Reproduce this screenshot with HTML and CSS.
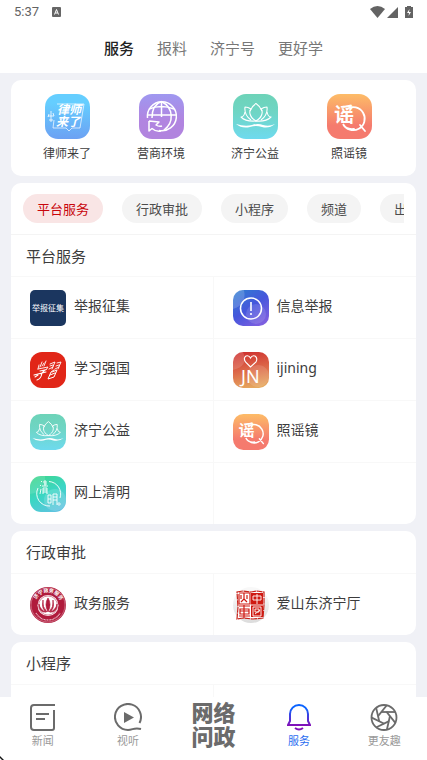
FILE: index.html
```
<!DOCTYPE html>
<html lang="zh-CN">

<head>
    <meta charset="UTF-8">
    <meta name="viewport" content="width=device-width, initial-scale=1.0">
    <title>服务</title>
    <link rel="stylesheet" href="styles.css">
</head>

<body>
    <!-- shared gradients and symbols -->
    <svg class="sprite" width="0" height="0" aria-hidden="true">
        <defs>
            <linearGradient id="sky" x1="0" y1="0" x2="0" y2="1">
                <stop offset="0.2" stop-color="#65ceff" />
                <stop offset="1" stop-color="#6ca1f3" />
            </linearGradient>
            <linearGradient id="violet" x1="0" y1="0" x2="0" y2="1">
                <stop offset="0" stop-color="#9f98f0" />
                <stop offset="0.6" stop-color="#b184e0" />
                <stop offset="1" stop-color="#b184de" />
            </linearGradient>
            <linearGradient id="mint" x1="0" y1="0" x2="0" y2="1">
                <stop offset="0" stop-color="#6dd3b8" />
                <stop offset="0.4" stop-color="#6fd5c4" />
                <stop offset="1" stop-color="#6edaee" />
            </linearGradient>
            <linearGradient id="peach" x1="0" y1="0" x2="0" y2="1">
                <stop offset="0" stop-color="#fdbc67" />
                <stop offset="0.7" stop-color="#f57b6e" />
                <stop offset="1" stop-color="#f57a6e" />
            </linearGradient>
            <linearGradient id="indigo" x1="0" y1="0" x2="0.7" y2="1">
                <stop offset="0" stop-color="#2c80d0" />
                <stop offset="0.55" stop-color="#4656dc" />
                <stop offset="1" stop-color="#7c5fe0" />
            </linearGradient>
            <linearGradient id="sunset" x1="0.4" y1="0" x2="0.6" y2="1">
                <stop offset="0" stop-color="#cf3330" />
                <stop offset="0.5" stop-color="#dd6a4a" />
                <stop offset="1" stop-color="#e6a95f" />
            </linearGradient>
            <linearGradient id="spring" x1="0.2" y1="0" x2="0.7" y2="1">
                <stop offset="0" stop-color="#3fd68f" />
                <stop offset="0.5" stop-color="#3bd6c4" />
                <stop offset="1" stop-color="#5fc3e0" />
            </linearGradient>
            <linearGradient id="silver" x1="0" y1="0" x2="0" y2="1">
                <stop offset="0.2" stop-color="#f8f8f8" />
                <stop offset="1" stop-color="#dcdcdc" />
            </linearGradient>
            <linearGradient id="bell" x1="0" y1="0" x2="0" y2="28" gradientUnits="userSpaceOnUse">
                <stop offset="0.2" stop-color="#0a63ff" />
                <stop offset="0.8" stop-color="#8210b8" />
            </linearGradient>
            <path id="seal-arc" d="M5.400 21.500A13 13 0 1 1 30.600 21.500" />
        </defs>
        <symbol id="lotus" viewBox="0 0 45 45">
            <rect width="45" height="45" rx="13" fill="url(#mint)" />
            <g fill="none" stroke="#fff" stroke-width="1.100" stroke-linejoin="round">
                <path d="M17 17Q19 12 23 9.500Q27 12 29 17" />
                <path d="M23 27C16 23 16 17 18 15M23 27C30 23 30 17 28 15" />
                <path d="M18 15Q15 13 12 13Q11 21 18 26M28 15Q31 13 34 13Q35 21 28 26" />
                <path d="M12 18Q11 23 8 23Q13 28 23 27Q33 28 38 23Q35 23 34 18" />
            </g>
            <path d="M3 30Q12 33 19 31Q25 29 30 31Q36 33 42 30Q36 35 29 33Q23 31 17 33Q9 35 3 30Z" fill="#fff" />
        </symbol>
        <symbol id="rumor" viewBox="0 0 45 45">
            <rect width="45" height="45" rx="13" fill="url(#peach)" />
            <text x="7" y="28" font-size="20" font-weight="700" fill="#fff">谣</text>
            <path d="M20 15A11.500 11.500 0 1 1 16 30Q19 36 27 35M33 31L38 37" fill="none" stroke="#fff" stroke-width="1.800" stroke-linecap="round" />
        </symbol>
    </svg>

    <header>
        <div class="status">
            <span class="clock">5:37</span>
            <svg width="10" height="10" viewBox="0 0 10 10">
                <rect width="9" height="10" rx="1" fill="#666" />
                <path d="M2.500 7.500L4.500 2.500L6.500 7.500M3.300 6H5.700" fill="none" stroke="#fff" />
            </svg>
            <svg class="wifi" width="15" height="12" viewBox="0 0 15 12">
                <path d="M0 3Q7.500-3 15 3L7.500 12Z" fill="#636363" />
            </svg>
            <svg width="11" height="11" viewBox="0 0 11 11">
                <path d="M11 0V11H0Z" fill="#636363" />
            </svg>
            <svg class="battery" width="8" height="12" viewBox="0 0 8 12">
                <path d="M0 1H2V0H6V1H8V12H0Z" fill="#636363" />
                <path d="M4.500 3L2 7H4L3.500 10L6 6H4Z" fill="#fff" />
            </svg>
        </div>
        <nav class="top-nav">
            <a href="#" class="active">服务</a>
            <a href="#">报料</a>
            <a href="#">济宁号</a>
            <a href="#">更好学</a>
        </nav>
    </header>

    <main>
        <section class="card quick">
            <a href="#">
                <svg class="quick-icon" viewBox="0 0 45 45">
                    <rect width="45" height="45" rx="13" fill="url(#sky)" />
                    <g fill="none" stroke="#fff">
                        <path d="M12 10H39L35 34H27L24 37L21 34H8L9 26" stroke-width="0.700" />
                        <path d="M3 22H9M6 17V28M4 20L3 23M8 19L9 22M4 26H8" stroke-width="0.800" />
                    </g>
                    <g fill="#fff" font-size="12" font-weight="700" font-style="italic">
                        <text x="12" y="20">律师</text>
                        <text x="11" y="32">来了</text>
                    </g>
                </svg>
                <span>律师来了</span>
            </a>
            <a href="#">
                <svg class="quick-icon" viewBox="0 0 45 45">
                    <rect width="45" height="45" rx="13" fill="url(#violet)" />
                    <g fill="none" stroke="#fff" stroke-width="1.500">
                        <path d="M8.500 24A14.500 14.500 0 1 1 20 36.500" />
                        <path d="M22.500 7.500V23M10 15Q22.500 10 35 15M8 21H37" />
                        <path d="M22.500 7.500C15 10 13 17 13 24M22.500 7.500C35 14 35 29 25 36" />
                        <path d="M10 27V37L13 34.500Q17 38 22 37M10 27L20 28L17 31Q20 33 23 32" stroke-linejoin="round" />
                    </g>
                </svg>
                <span>营商环境</span>
            </a>
            <a href="#">
                <svg class="quick-icon"><use href="#lotus" /></svg>
                <span>济宁公益</span>
            </a>
            <a href="#">
                <svg class="quick-icon"><use href="#rumor" /></svg>
                <span>照谣镜</span>
            </a>
        </section>

        <section class="card">
            <div class="chips">
                <button class="chip selected">平台服务</button>
                <button class="chip">行政审批</button>
                <button class="chip">小程序</button>
                <button class="chip">频道</button>
                <button class="chip">出行</button>
            </div>
            <h2>平台服务</h2>
            <div class="grid">
                <a href="#">
                    <svg class="icon" viewBox="0 0 36 36">
                        <rect width="36" height="36" rx="5" fill="#1b365f" />
                        <text x="2" y="21" font-size="8" fill="#fff">举报征集</text>
                    </svg>
                    <span>举报征集</span>
                </a>
                <a href="#">
                    <svg class="icon" viewBox="0 0 36 36">
                        <rect width="36" height="36" rx="10" fill="url(#indigo)" />
                        <path d="M0 19V10Q0 0 10 0H11Q14 15 0 19Z" fill="#fff" opacity="0.180" />
                        <circle cx="23" cy="24" r="10" fill="#fff" opacity="0.120" />
                        <circle cx="18" cy="18.500" r="10.500" fill="none" stroke="#fff" stroke-width="1.500" />
                        <path d="M18 12V21" stroke="#fff" stroke-width="1.600" />
                        <circle cx="18" cy="24" r="1.100" fill="#fff" />
                    </svg>
                    <span>信息举报</span>
                </a>
                <a href="#">
                    <svg class="icon" viewBox="0 0 36 36">
                        <rect width="36" height="36" rx="12" fill="#e12618" />
                        <!-- brush-written name -->
                        <g fill="none" stroke="#fff" stroke-linecap="round">
                            <path d="M9 13L8 17M12 10L10 15M14 11L12 14M16 9L14 14M8 17L18 15L16 18" stroke-width="0.900" />
                            <path d="M10 19L15 18L11 22M4 23L16 20M12 21Q11 27 7 28M5 25L8 23" stroke-width="1.100" />
                            <path d="M20 12L25 10L22 17M20 14L23 13M19 17L23 15M27 11L31 10L28 17M26 14L29 13M25 17L29 15" stroke-width="0.900" />
                            <path d="M24 18L21 20L18 27L24 25L27 18L22 20M20 23L25 21" stroke-width="1" />
                        </g>
                    </svg>
                    <span>学习强国</span>
                </a>
                <a href="#">
                    <svg class="icon" viewBox="0 0 36 36">
                        <rect width="36" height="36" rx="10" fill="url(#sunset)" />
                        <path d="M0 18V10Q0 0 10 0Q16 14 0 18Z" fill="#fff" opacity="0.150" />
                        <circle cx="25" cy="24" r="11" fill="#fff" opacity="0.120" />
                        <path d="M17.500 15L12.500 10Q10 6 13 4Q16 3 17.500 6Q19 3 22 4Q25 6 23 10Z" fill="none" stroke="#fff" stroke-width="1.100" />
                        <text class="latin" x="8" y="31" font-size="18" fill="#fff">JN</text>
                    </svg>
                    <span class="latin">ijining</span>
                </a>
                <a href="#">
                    <svg class="icon"><use href="#lotus" /></svg>
                    <span>济宁公益</span>
                </a>
                <a href="#">
                    <svg class="icon"><use href="#rumor" /></svg>
                    <span>照谣镜</span>
                </a>
                <a href="#">
                    <svg class="icon" viewBox="0 0 36 36">
                        <rect width="36" height="36" rx="11" fill="url(#spring)" />
                        <path d="M0 18V11Q0 0 11 0H15Q16 16 0 18Z" fill="#fff" opacity="0.120" />
                        <circle cx="25" cy="24" r="11" fill="#fff" opacity="0.150" />
                        <path d="M8 12A12.500 12.500 0 0 0 20 30M19 5.500A12.500 12.500 0 0 1 30 22" fill="none" stroke="#fff" stroke-width="0.900" />
                        <circle cx="29" cy="28" r="1.200" fill="none" stroke="#fff" stroke-width="0.800" />
                        <g fill="none" stroke="#fff" stroke-width="0.900">
                            <path d="M11 5L12 6M10 9L11 10M10 18L11 13M13 6H17M14 8H17M15 4V10M12 10H18M13 18V12H17V18M13 14H17M13 16H17" />
                            <path d="M18 19V27M18 19H21V27H18M18 23H21M23 29V18H27V29M23 21H27M23 24H27" />
                        </g>
                    </svg>
                    <span>网上清明</span>
                </a>
                <div class="blank"></div>
            </div>
        </section>

        <section class="card">
            <h2>行政审批</h2>
            <div class="grid">
                <a href="#">
                    <svg class="icon" viewBox="0 0 36 36">
                        <circle cx="18" cy="18" r="18" fill="#b01b3c" />
                        <circle cx="18" cy="18" r="17" fill="none" stroke="#e5b4c0" stroke-width="0.500" />
                        <circle cx="18" cy="18.500" r="10.500" fill="#fff" />
                        <circle cx="18" cy="18.500" r="9.500" fill="none" stroke="#b01b3c" stroke-width="0.500" />
                        <text font-size="5" font-weight="700" fill="#fff"><textPath href="#seal-arc" startOffset="9">济宁政务服务</textPath></text>
                        <path d="M6 26Q10 33 18 33Q26 33 30 26" fill="none" stroke="#eec5cf" stroke-width="1.200" stroke-dasharray="1 0.500" />
                        <path d="M18 11Q22 17 18 25Q14 17 18 11ZM13 13Q12 20 17 25Q11 23 13 13ZM23 13Q24 20 19 25Q25 23 23 13ZM9 17Q10 23 16 25Q9 26 9 17ZM27 17Q26 23 20 25Q27 26 27 17Z" fill="#b01b3c" stroke="#b01b3c" stroke-width="0.700" />
                    </svg>
                    <span>政务服务</span>
                </a>
                <a href="#">
                    <svg class="icon" viewBox="0 0 36 36">
                        <circle cx="18" cy="18" r="18" fill="url(#silver)" />
                        <path d="M4 5L10 4L18 5L24 4L31 5V18L30 31L20 32L10 31L4 32L5 20Z" fill="#fff" stroke="#c8231b" stroke-width="1.200" stroke-dasharray="6 0.600" />
                        <path d="M18 6H30V30H18Z" fill="#cf1a12" />
                        <g fill="none" stroke="#cf1a12" stroke-width="1.200">
                            <path d="M6 7V17H17V6H6M11 6V12L8 15M11 12L14 15M8 8V12M14 8V12" />
                            <path d="M6 19H17M7 22H16V27H7ZM7 24H16M11 18V31M6 29H17" />
                        </g>
                        <g fill="none" stroke="#fff" stroke-width="0.900">
                            <path d="M20 9H28V13H20ZM24 7V17M18 18H30M20 20H28V29H20ZM22 22H26V25H22ZM22 27L27 23" />
                        </g>
                    </svg>
                    <span>爱山东济宁厅</span>
                </a>
            </div>
        </section>

        <section class="card">
            <h2>小程序</h2>
            <div class="grid">
                <div class="blank"></div>
                <div class="blank"></div>
            </div>
        </section>
    </main>

    <nav class="tab-bar">
        <a href="#">
            <svg width="26" height="28" viewBox="0 0 26 28" fill="none" stroke="#6b6b6b" stroke-width="2">
                <path d="M25 2H4Q1 2 1 5V24Q1 27 4 27H22Q24 27 24 25V7" />
                <path d="M6 11H19M6 16H15" />
            </svg>
            <span>新闻</span>
        </a>
        <a href="#">
            <svg width="28" height="28" viewBox="0 0 28 28" fill="none" stroke="#6b6b6b" stroke-width="2">
                <path d="M25.500 20A13 13 0 1 0 14 27C19 27 20 24 27 26" />
                <path d="M10 9L20 14.500L10 20Z" fill="#6b6b6b" stroke="none" />
            </svg>
            <span>视听</span>
        </a>
        <a href="#" class="big">网络<br>问政</a>
        <a href="#" class="current">
            <svg width="24" height="28" viewBox="0 0 24 28" fill="none" stroke="url(#bell)" stroke-width="2">
                <path d="M3 11A9 9 0 0 1 21 11V18L23 22H1L3 18Z" />
                <path d="M8 25Q12 28 16 25" />
            </svg>
            <span>服务</span>
        </a>
        <a href="#">
            <svg width="28" height="28" viewBox="0 0 28 28" fill="none" stroke="#6b6b6b" stroke-width="1.800">
                <circle cx="14" cy="14.500" r="12.500" />
                <g>
                    <path id="blade" d="M11 9H25" />
                    <use href="#blade" transform="rotate(51.400 14 14.500)" />
                    <use href="#blade" transform="rotate(102.900 14 14.500)" />
                    <use href="#blade" transform="rotate(154.300 14 14.500)" />
                    <use href="#blade" transform="rotate(205.700 14 14.500)" />
                    <use href="#blade" transform="rotate(257.100 14 14.500)" />
                    <use href="#blade" transform="rotate(308.600 14 14.500)" />
                </g>
            </svg>
            <span>更友趣</span>
        </a>
    </nav>

    <svg class="pointer" width="5" height="5" viewBox="0 0 5 5" aria-hidden="true">
        <path d="M0 1L4 5H2L0 3Z" fill="#111" />
    </svg>
</body>

</html>
```
FILE: styles.css
```
* {
    box-sizing: border-box;
}

body {
    margin: 0;
    height: 100vh;
    display: flex;
    flex-direction: column;
    background-color: #f0f1f6;
    color: #3c3c3c;
    font-family: "Noto Sans CJK SC", sans-serif;
    font-size: 14px;
}

a {
    color: inherit;
    text-decoration: none;
}

svg {
    display: block;
    flex-shrink: 0;
}

.sprite {
    position: absolute;
}

.latin {
    font-family: "Noto Sans", sans-serif;
}

header {
    background-color: #fff;
    height: 73px;
    flex-shrink: 0;
}

.status {
    display: flex;
    align-items: center;
    height: 24px;
    padding: 0 14px;
}

.clock {
    font-family: Roboto, sans-serif;
    font-size: 13px;
    line-height: 24px;
    color: #636363;
    width: 38px;
}

.wifi {
    margin-left: auto;
    margin-right: 2px;
}

.battery {
    margin-left: 7px;
}

.top-nav {
    display: flex;
    justify-content: center;
    gap: 23px;
    font-size: 15px;
    line-height: 48px;
    color: #777;
}

.top-nav .active {
    color: #222;
    font-weight: 500;
}

main {
    flex: 1;
    min-height: 0;
    overflow-y: auto;
    scrollbar-width: none;
    display: flex;
    flex-direction: column;
    gap: 7px;
    padding: 7px 11px;
}

.card {
    background-color: #fff;
    border-radius: 10px;
    overflow: hidden;
    flex-shrink: 0;
}

.quick {
    display: grid;
    grid-template-columns: repeat(4, 1fr);
    padding: 14px 20px 13px 9px;
    font-size: 12px;
}

.quick a {
    display: flex;
    flex-direction: column;
    align-items: center;
    gap: 4px;
    line-height: 20px;
}

.quick-icon {
    width: 45px;
    height: 45px;
}

.chips {
    display: flex;
    gap: 19px;
    margin: 0 12px;
    padding: 11px 0;
    overflow: hidden;
}

.chip {
    flex-shrink: 0;
    height: 29px;
    padding: 0 14px;
    border: none;
    border-radius: 15px;
    background-color: #f4f4f4;
    color: #4c4c4c;
    font-family: inherit;
    font-size: 13px;
    line-height: 28px;
    cursor: pointer;
}

.chip.selected {
    background-color: #f9e5e5;
    color: #c8060c;
}

h2 {
    margin: 0;
    padding-left: 15px;
    font-size: 15px;
    font-weight: 400;
    line-height: 41px;
    height: 42px;
}

.chips + h2 {
    border-top: 1px solid #f4f4f4;
}

.grid {
    display: grid;
    grid-template-columns: 1fr 1fr;
}

.grid a,
.blank {
    display: flex;
    align-items: center;
    gap: 8px;
    height: 62px;
    padding-left: 19px;
    border-top: 1px solid #f8f8f8;
}

.grid > :nth-child(odd) {
    border-right: 1px solid #f8f8f8;
}

.grid span {
    padding-bottom: 5px;
}

.icon {
    width: 36px;
    height: 36px;
}

.tab-bar {
    display: grid;
    grid-template-columns: repeat(5, 1fr);
    height: 63px;
    flex-shrink: 0;
    background-color: #fff;
    color: #999;
    font-size: 11px;
}

.tab-bar a {
    display: flex;
    flex-direction: column;
    align-items: center;
    gap: 1px;
    padding-top: 6px;
    line-height: 16px;
}

.tab-bar .big {
    display: block;
    text-align: center;
    padding-top: 2px;
    color: #6b6b6b;
    font-size: 22px;
    font-weight: 900;
    line-height: 24px;
}

.tab-bar .current {
    color: #2a6cf0;
}

/* mouse pointer at the corner of the screen */
.pointer {
    position: absolute;
    left: 0;
    bottom: 0;
}
```
